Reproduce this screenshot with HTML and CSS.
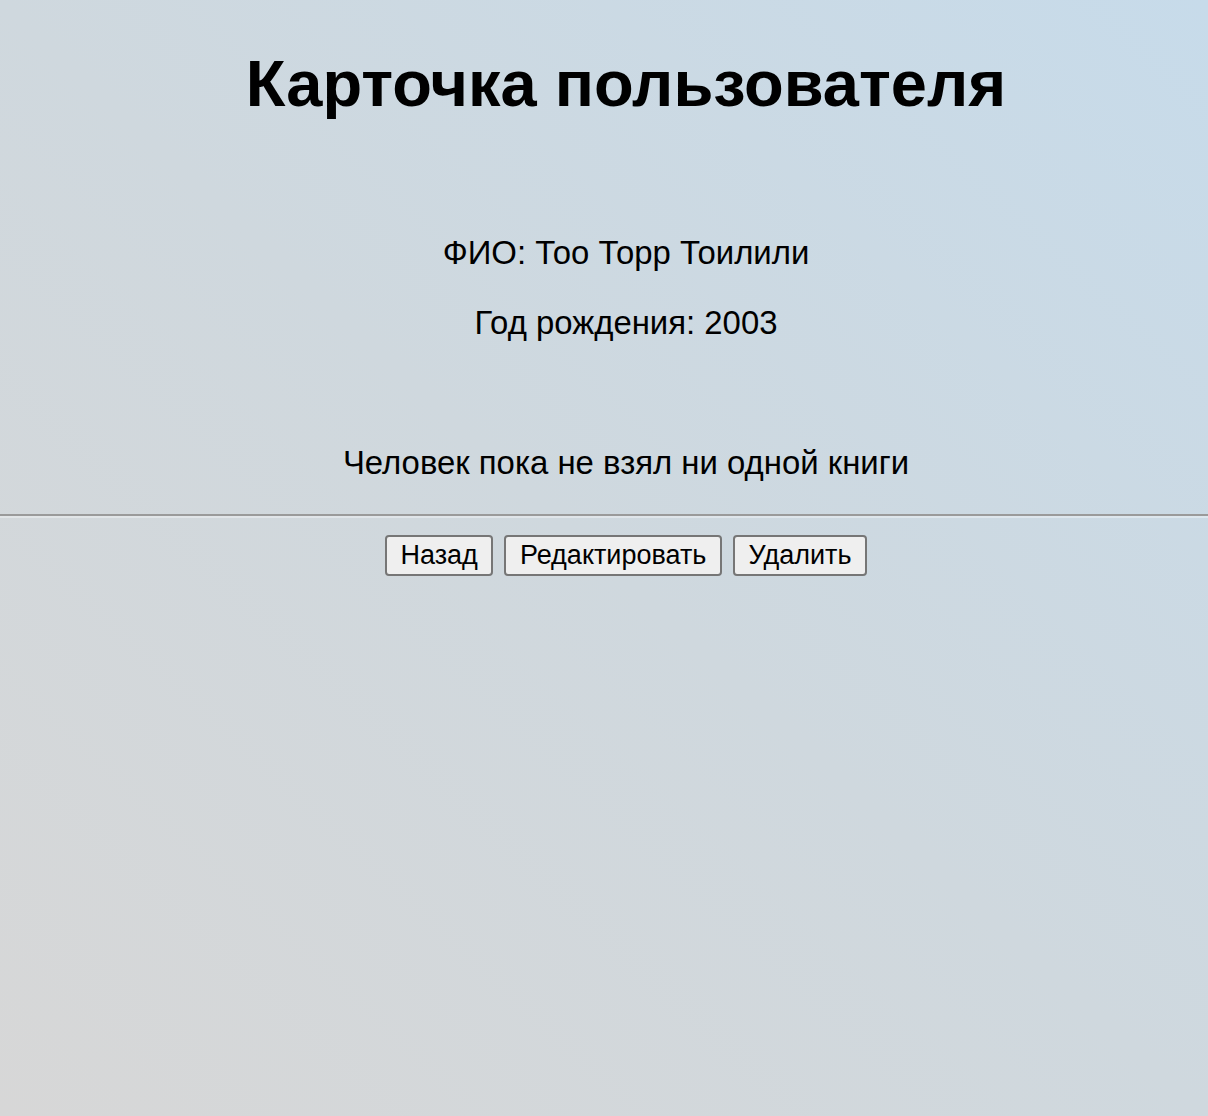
FILE: index.html
```html
<!DOCTYPE html>
<html lang="ru">
<head>
<meta charset="utf-8">
<title>Карточка пользователя</title>
<link rel="stylesheet" href="styles.css">
</head>
<body>
<div class="page">
  <h1 class="title">Карточка пользователя</h1>
  <div class="info">
    <p class="line fio">ФИО: Тоо Торр Тоилили</p>
    <p class="line year">Год рождения: 2003</p>
  </div>
  <p class="line books">Человек пока не взял ни одной книги</p>
</div>
<hr class="divider">
<div class="actions">
  <button class="btn" type="button">Назад</button>
  <button class="btn" type="button">Редактировать</button>
  <button class="btn" type="button">Удалить</button>
</div>
</body>
</html>
```
FILE: styles.css
```css
html, body {
  margin: 0;
  padding: 0;
}
body {
  min-height: 100vh;
  font-family: "Liberation Sans", Arial, Helvetica, sans-serif;
  color: #000;
  background: linear-gradient(to top right, #d7d7d7 0%, #cfd8de 50%, #c7dbea 100%);
}
.page {
  padding-left: 44px;
  text-align: center;
  padding-top: 48px;
}
.title {
  margin: 0;
  font-size: 65px;
  line-height: 72px;
  font-weight: bold;
}
.info {
  padding-top: 115px;
}
.line {
  margin: 0;
  font-size: 32.9px;
  line-height: 36px;
}
.year {
  margin-top: 34px;
}
.books {
  margin-top: 104px;
}
.divider {
  margin: 33px 0 0;
  height: 0;
  border: 0;
  border-top: 2px solid #9a9a9a;
  border-bottom: 2px solid rgba(255, 255, 255, 0.35);
}
.actions {
  display: flex;
  justify-content: center;
  gap: 11px;
  padding-left: 44px;
  margin-top: 17px;
}
.btn {
  height: 41px;
  padding: 0 13.5px;
  font-family: "Liberation Sans", Arial, Helvetica, sans-serif;
  font-size: 27px;
  color: #000;
  background: #efefef;
  border: 2px solid #767676;
  border-radius: 4px;
}
```
